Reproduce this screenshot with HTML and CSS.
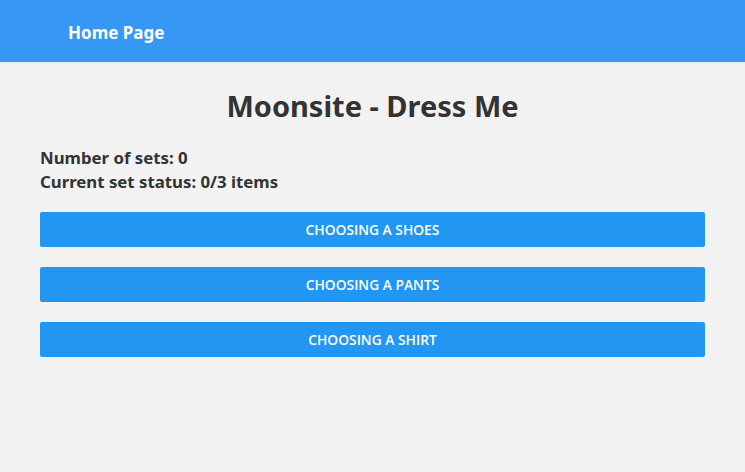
FILE: index.html
```html
<!DOCTYPE html>
<html>
<head>
<meta charset="utf-8">
<link rel="stylesheet" href="styles.css">
</head>
<body>
<header class="topbar"><span class="brand">Home Page</span></header>
<main class="content">
  <h1 class="title">Moonsite - Dress Me</h1>
  <div class="stats">
    <div>Number of sets: 0</div>
    <div>Current set status: 0/3 items</div>
  </div>
  <div class="buttons">
    <button class="btn">CHOOSING A SHOES</button>
    <button class="btn">CHOOSING A PANTS</button>
    <button class="btn">CHOOSING A SHIRT</button>
  </div>
</main>
</body>
</html>
```
FILE: styles.css
```css
html, body { margin: 0; padding: 0; }
body {
  background: #f2f2f2;
  font-family: "Noto Sans", "Open Sans", sans-serif;
  color: #333333;
  width: 745px;
  height: 472px;
  overflow: hidden;
}
.topbar {
  height: 62px;
  background: #3797f4;
  display: flex;
  align-items: center;
  padding-left: 68px;
  border-bottom: 1px solid #e4e4e4;
}
.brand {
  color: #ffffff;
  font-weight: 700;
  font-size: 17px;
  padding-top: 2px;
}
.content {
  padding: 0 40px;
}
.title {
  margin: 22px 0 0;
  text-align: center;
  font-size: 29px;
  font-weight: 700;
  line-height: 42px;
  color: #333333;
}
.stats {
  margin-top: 19px;
  font-size: 16.8px;
  font-weight: 700;
  line-height: 24px;
}
.buttons {
  margin-top: 18px;
  display: flex;
  flex-direction: column;
  gap: 20px;
}
.btn {
  height: 35px;
  border: none;
  border-radius: 2px;
  background: #2196f3;
  color: #ffffff;
  font-family: "Open Sans", "Noto Sans", sans-serif;
  font-weight: 600;
  font-size: 13.8px;
  padding: 0;
  width: 100%;
}
```
